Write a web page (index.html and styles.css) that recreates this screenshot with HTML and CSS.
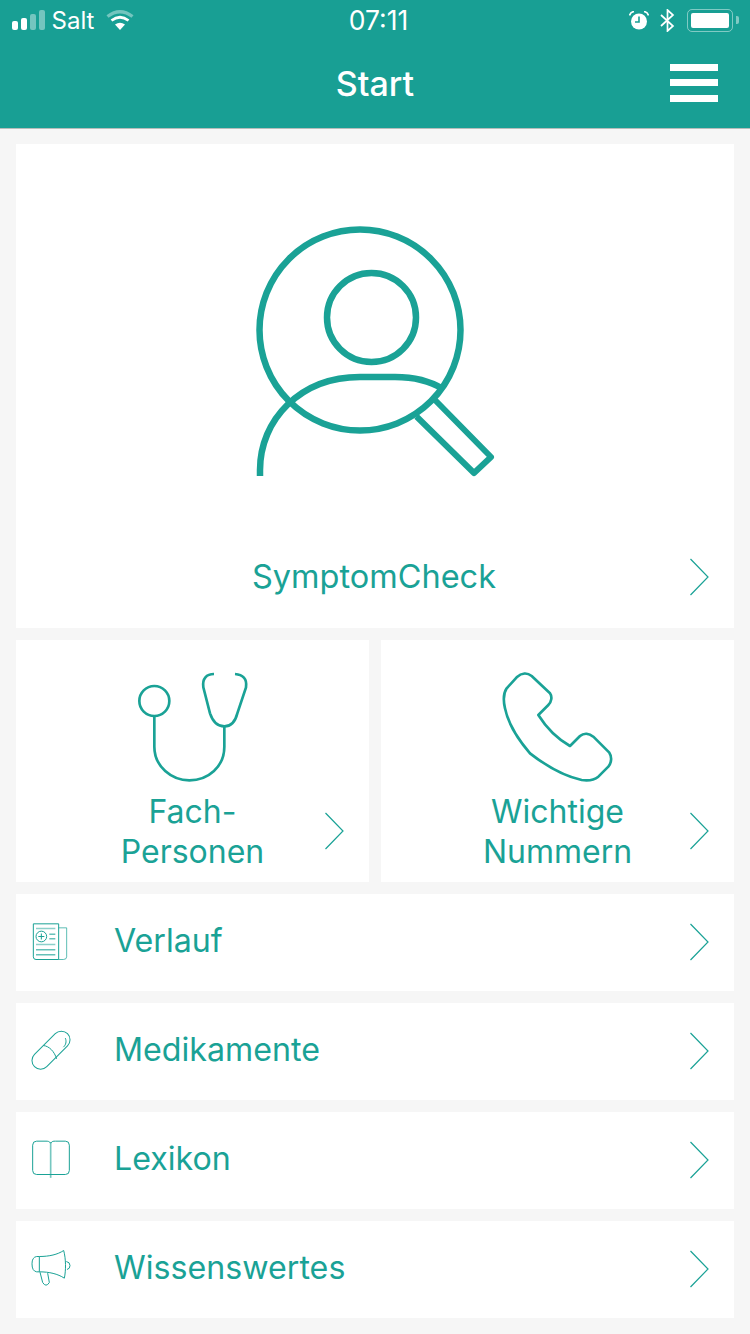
FILE: index.html
```html
<!DOCTYPE html>
<html>

<head>
    <link rel="stylesheet" href="styles.css">
    <title>Start</title>
</head>

<body>
    <svg class="defs" width="0" height="0">
        <symbol id="chevron" viewBox="0 0 20 38">
            <path d="M1.5 1 L19 19 L1.5 37" fill="none" stroke="#1aa296" stroke-width="1.2" />
        </symbol>
    </svg>

    <header class="header">
        <div class="status_bar">
            <div class="status_left">
                <div class="signal">
                    <span class="bar bar_1"></span>
                    <span class="bar bar_2"></span>
                    <span class="bar bar_3 bar_off"></span>
                    <span class="bar bar_4 bar_off"></span>
                </div>
                <span class="carrier">Salt</span>
                <svg class="wifi" width="28" height="20" viewBox="0 0 28 20">
                    <path d="M1.5 6.5 Q14 -3 26.5 6.5" fill="none" stroke="#fff" stroke-width="3.4" opacity="0.4" />
                    <path d="M5.5 10.5 Q14 4 22.5 10.5" fill="none" stroke="#fff" stroke-width="2.8" />
                    <path d="M14 20 L9 14.5 Q14 11 19 14.5 Z" fill="#fff" />
                </svg>
            </div>
            <div class="status_time">07:11</div>
            <div class="status_right">
                <svg class="alarm" width="20" height="19" viewBox="0 0 20 19">
                    <circle cx="10" cy="10.5" r="8" fill="#fff" />
                    <path d="M10 5.5 V11 H6" fill="none" stroke="#189f94" stroke-width="1.6" />
                    <path d="M0.5 4.5 Q1.5 1 5 0.5 M19.5 4.5 Q18.5 1 15 0.5" fill="none" stroke="#fff" stroke-width="1.6" />
                </svg>
                <svg class="bluetooth" width="15" height="23" viewBox="0 0 15 23">
                    <path d="M1 6 L13 17 L7.5 22 V1 L13 6 L1 17" fill="none" stroke="#fff" stroke-width="1.7" />
                </svg>
                <div class="battery">
                    <div class="battery_body">
                        <div class="battery_fill"></div>
                    </div>
                    <div class="battery_cap"></div>
                </div>
            </div>
        </div>
        <div class="nav_bar">
            <span></span>
            <h1 class="title">Start</h1>
            <div class="menu_button">
                <span></span>
                <span></span>
                <span></span>
            </div>
        </div>
    </header>

    <main class="page">
        <a class="card hero_card">
            <svg width="250" height="260" viewBox="250 220 250 260" fill="none" stroke="#1aa296">
                <circle cx="360" cy="330" r="100.5" stroke-width="6.5" />
                <circle cx="371.5" cy="317.5" r="44.5" stroke-width="6.5" />
                <path d="M260 476 V470 C260 420 300 377 360 377 H395 C415 377 430 381 443 389" stroke-width="6.5" />
                <path d="M416.5 416.5 L474 473 L491 457 L435 400" stroke-width="6" stroke-linejoin="round" />
            </svg>
            <span class="hero_label">SymptomCheck</span>
            <svg class="chevron chevron_corner"><use href="#chevron" /></svg>
        </a>

        <div class="half_row">
            <a class="card half_card">
                <svg width="115" height="115" viewBox="75 54 345 345" fill="none" stroke="#1aa296" stroke-width="8">
                    <circle cx="133" cy="153" r="45" />
                    <path d="M133 200 V290 C133 350 185 391 238 391 C295 391 343 350 343 290 V230" />
                    <path d="M312 72 C290 72 276 85 280 112 L300 190 C310 220 325 229 343 229 C360 229 375 218 382 190 L408 112 C412 85 398 74 375 72" />
                </svg>
                <span class="half_label">Fach-<br>Personen</span>
                <svg class="chevron chevron_corner"><use href="#chevron" /></svg>
            </a>
            <a class="card half_card">
                <svg width="115" height="115" viewBox="90 54 345 345" fill="none" stroke="#1aa296" stroke-width="8">
                    <path d="M185 78 L240 130 C247 140 245 155 235 165 L205 195 C230 235 260 265 300 288 L330 258 C342 248 358 250 370 260 L418 308 C426 320 425 338 415 350 L385 380 C370 392 355 393 335 390 C280 378 225 345 180 310 C150 275 115 225 105 175 C98 145 100 130 110 115 L140 82 C155 68 172 68 185 78 Z" stroke-linejoin="round" />
                </svg>
                <span class="half_label">Wichtige<br>Nummern</span>
                <svg class="chevron chevron_corner"><use href="#chevron" /></svg>
            </a>
        </div>

        <a class="card list_row">
            <svg class="list_icon" width="80" height="80" viewBox="0 -7.5 240 240" fill="none" stroke="#1aa296" stroke-width="3">
                <path d="M52 55 H128 V162 H60 Q52 162 52 154 Z" />
                <path d="M128 67 H152 V154 Q152 162 142 162 H128" opacity="0.7" />
                <circle cx="76" cy="93" r="16" />
                <path d="M76 84 V102 M67 93 H85" />
                <path d="M60 69 H118 M60 117 H118" stroke-width="5" opacity="0.5" />
                <path d="M100 86 H118 M100 100 H118 M60 133 H118 M60 148 H118" />
            </svg>
            <span class="list_label">Verlauf</span>
            <svg class="chevron chevron_end"><use href="#chevron" /></svg>
        </a>
        <a class="card list_row">
            <svg class="list_icon" width="80" height="80" viewBox="0 -10.5 240 240" fill="none" stroke="#1aa296" stroke-width="3">
                <rect x="35" y="78" width="140" height="52" rx="26" transform="rotate(-45 105 104)" />
                <path d="M82 90 C100 92 115 108 122 130" />
                <path d="M148 68 C152 78 150 88 142 95" />
            </svg>
            <span class="list_label">Medikamente</span>
            <svg class="chevron chevron_end"><use href="#chevron" /></svg>
        </a>
        <a class="card list_row">
            <svg class="list_icon" width="80" height="80" viewBox="0 1.5 240 240" fill="none" stroke="#1aa296" stroke-width="3">
                <path d="M104 68 C100 62 95 62 90 62 H62 Q50 62 50 74 V150 Q50 162 62 162 H148 Q160 162 160 150 V74 Q160 62 148 62 H118 C112 62 108 62 104 68" />
                <path d="M104 66 V172" stroke-width="5" opacity="0.6" />
            </svg>
            <span class="list_label">Lexikon</span>
            <svg class="chevron chevron_end"><use href="#chevron" /></svg>
        </a>
        <a class="card list_row">
            <svg class="list_icon" width="80" height="80" viewBox="0 -1.5 240 240" fill="none" stroke="#1aa296" stroke-width="3">
                <path d="M70 78 H62 Q48 80 48 100 Q48 122 62 124 H70 Z" />
                <path d="M70 78 C100 78 125 72 143 60 C150 85 150 120 145 143 C125 130 100 124 70 124" />
                <path d="M151 93 Q162 95 162 105 Q162 115 153 117" />
                <path d="M72 125 L80 156 Q90 172 100 156 L95 128" />
            </svg>
            <span class="list_label">Wissenswertes</span>
            <svg class="chevron chevron_end"><use href="#chevron" /></svg>
        </a>
    </main>
</body>

</html>
```

FILE: styles.css
```css
* {
    box-sizing: border-box;
}

html,
body {
    margin: 0;
    height: 100%;
}

body {
    background: #f6f6f6;
    font-family: Inter, "Liberation Sans", sans-serif;
    color: #1aa296;
    overflow: hidden;
}

.defs {
    position: absolute;
}

.header {
    height: 129px;
    background: #189f94;
    border-bottom: 1px solid #b5bdbb;
    color: #ffffff;
}

.status_bar {
    height: 40px;
    display: grid;
    grid-template-columns: 1fr auto 1fr;
    align-items: center;
    padding: 0 11px 0 12px;
}

.status_left,
.status_right {
    display: flex;
    align-items: center;
}

.status_right {
    justify-content: flex-end;
}

.signal {
    display: flex;
    align-items: flex-end;
    gap: 3.5px;
    height: 20px;
}

.bar {
    width: 5.5px;
    background: #ffffff;
    border-radius: 2px;
}

.bar_1 {
    height: 9px;
}

.bar_2 {
    height: 12px;
}

.bar_3 {
    height: 16px;
}

.bar_4 {
    height: 20px;
}

.bar_off {
    opacity: 0.4;
}

.carrier {
    margin-left: 7px;
    font-size: 24px;
}

.wifi {
    margin-left: 12px;
}

.status_time {
    margin-left: 6px;
    font-size: 26.5px;
}

.alarm {
    margin-right: 11px;
}

.bluetooth {
    margin-right: 12px;
}

.battery {
    display: flex;
    align-items: center;
}

.battery_body {
    width: 46px;
    height: 23px;
    padding: 3px;
    border: 1.5px solid rgba(255, 255, 255, 0.45);
    border-radius: 5px;
}

.battery_fill {
    height: 100%;
    background: #ffffff;
    border-radius: 2px;
}

.battery_cap {
    width: 3px;
    height: 8px;
    margin-left: 3px;
    background: rgba(255, 255, 255, 0.45);
    border-radius: 0 2px 2px 0;
}

.nav_bar {
    height: 88px;
    display: grid;
    grid-template-columns: 1fr auto 1fr;
    align-items: center;
    padding: 0 32px;
}

.title {
    margin: 0 0 2px;
    font-size: 34px;
    font-weight: 500;
}

.menu_button {
    justify-self: end;
    display: flex;
    flex-direction: column;
    gap: 8.5px;
    width: 48px;
    margin-top: -3px;
}

.menu_button span {
    height: 7px;
    background: #ffffff;
}

.page {
    display: flex;
    flex-direction: column;
    gap: 12px;
    padding: 15px 16px 16px;
}

.card {
    position: relative;
    display: flex;
    background: #ffffff;
}

.hero_card {
    height: 484px;
    flex-direction: column;
    align-items: center;
    padding-top: 76px;
}

.hero_label {
    margin-top: 77px;
    margin-right: 2px;
    font-size: 32.5px;
    line-height: 40px;
}

.half_row {
    display: grid;
    grid-template-columns: 1fr 1fr;
    gap: 12px;
}

.half_card {
    height: 242px;
    flex-direction: column;
    align-items: center;
    padding-top: 28px;
}

.half_label {
    margin-top: 9px;
    font-size: 32px;
    line-height: 40px;
    text-align: center;
}

.list_row {
    height: 97px;
    align-items: center;
}

.list_label {
    margin-left: 18px;
    margin-bottom: 4px;
    font-size: 32.2px;
}

.chevron {
    width: 20px;
    height: 38px;
}

.chevron_corner {
    position: absolute;
    right: 25px;
    bottom: 32px;
}

.chevron_end {
    margin-left: auto;
    margin-right: 25px;
    margin-bottom: 2px;
}
```
